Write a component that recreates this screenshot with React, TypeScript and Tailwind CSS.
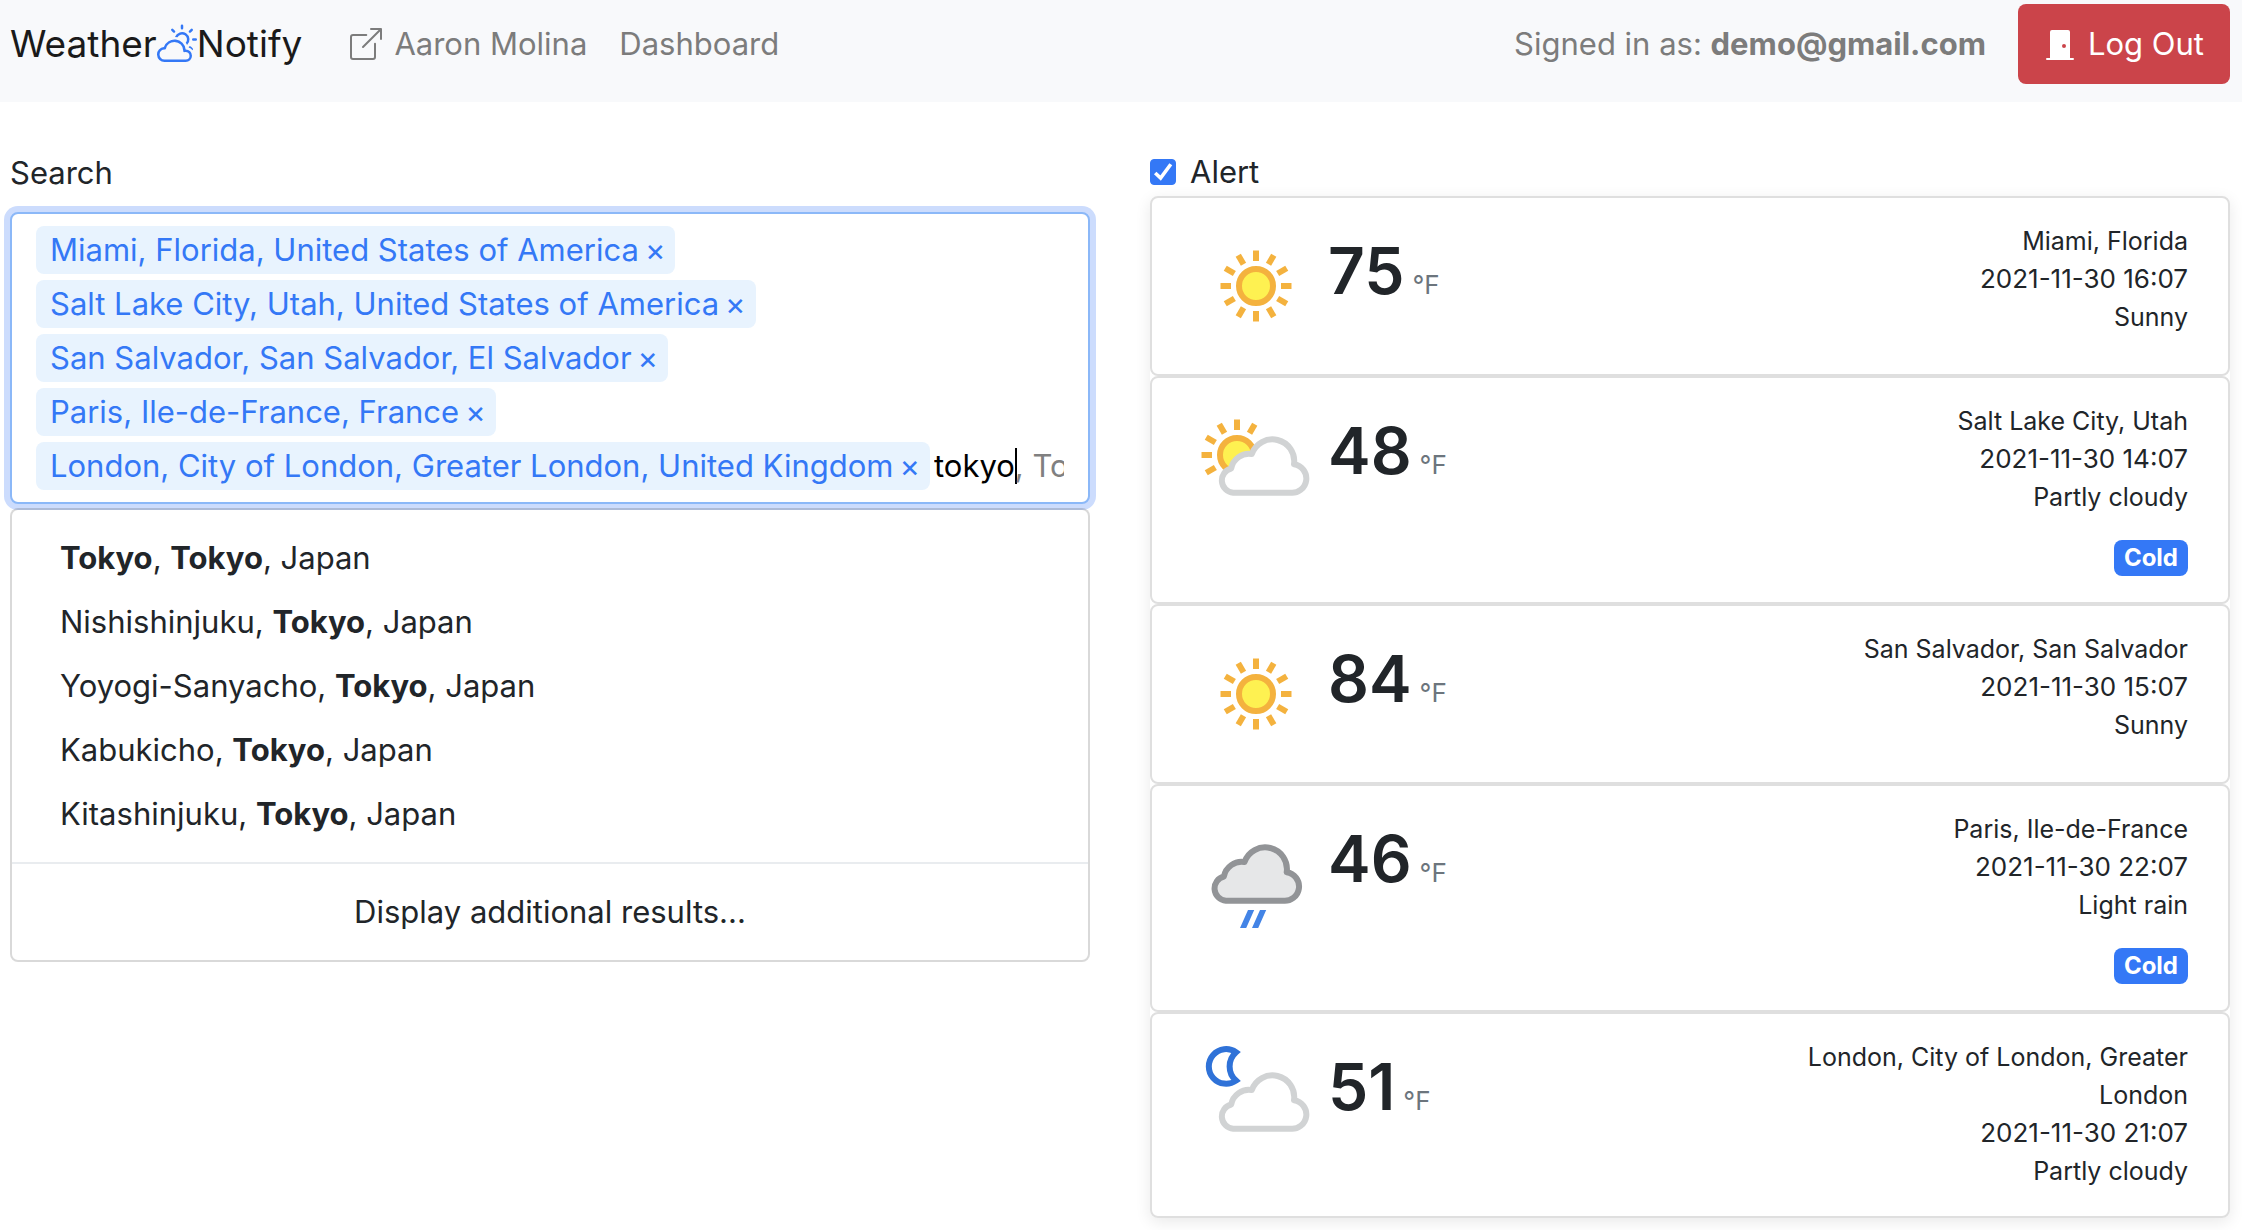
import React, { useState } from "react";
import { BsBoxArrowUpRight, BsCloudSun, BsDoorClosedFill } from "react-icons/bs";

type IconName = "sunny" | "partly-day" | "rain" | "partly-night";

type Report = {
  icon: IconName;
  temp: number;
  place: string;
  time: string;
  condition: string;
  cold?: boolean;
};

const SELECTED = [
  "Miami, Florida, United States of America",
  "Salt Lake City, Utah, United States of America",
  "San Salvador, San Salvador, El Salvador",
  "Paris, Ile-de-France, France",
  "London, City of London, Greater London, United Kingdom",
];

const RESULTS = [
  "Tokyo, Tokyo, Japan",
  "Nishishinjuku, Tokyo, Japan",
  "Yoyogi-Sanyacho, Tokyo, Japan",
  "Kabukicho, Tokyo, Japan",
  "Kitashinjuku, Tokyo, Japan",
];

const REPORTS: Report[] = [
  { icon: "sunny", temp: 75, place: "Miami, Florida", time: "2021-11-30 16:07", condition: "Sunny" },
  { icon: "partly-day", temp: 48, place: "Salt Lake City, Utah", time: "2021-11-30 14:07", condition: "Partly cloudy", cold: true },
  { icon: "sunny", temp: 84, place: "San Salvador, San Salvador", time: "2021-11-30 15:07", condition: "Sunny" },
  { icon: "rain", temp: 46, place: "Paris, Ile-de-France", time: "2021-11-30 22:07", condition: "Light rain", cold: true },
  { icon: "partly-night", temp: 51, place: "London, City of London, Greater London", time: "2021-11-30 21:07", condition: "Partly cloudy" },
];

const ALL_RAYS = [0, 30, 60, 90, 120, 150, 180, 210, 240, 270, 300, 330];
const BEHIND_CLOUD_RAYS = [150, 180, 210, 240, 270, 300];

function Sun({ cx, cy, rays }: { cx: number; cy: number; rays: number[] }) {
  return (
    <g transform={`translate(${cx} ${cy})`} stroke="#f4b23e" strokeWidth="6">
      {rays.map((angle) => (
        <line key={angle} x1="25" y1="0" x2="35.5" y2="0" transform={`rotate(${angle})`} />
      ))}
      <circle r="17" fill="#fef151" />
    </g>
  );
}

function Cloud({ fill, stroke, shift = 0 }: { fill: string; stroke: string; shift?: number }) {
  return (
    <path
      transform={`translate(${shift} 0)`}
      d="M41.2 90.7A12.3 12.3 0 0 1 39.2 66.5A18 18 0 0 1 59.8 52.1A21.8 21.8 0 0 1 102 62.3A14.3 14.3 0 0 1 98 90.7Z"
      fill={fill}
      stroke={stroke}
      strokeWidth="6"
      strokeLinejoin="round"
    />
  );
}

function WeatherIcon({ name }: { name: IconName }) {
  return (
    <svg viewBox="0 0 128 128" className="size-32 shrink-0" fill="none" role="img" aria-label={name}>
      {name === "sunny" && <Sun cx={64} cy={64} rays={ALL_RAYS} />}
      {name === "partly-day" && (
        <>
          <Sun cx={45} cy={53} rays={BEHIND_CLOUD_RAYS} />
          <Cloud fill="#ffffff" stroke="#d1d3d4" />
        </>
      )}
      {name === "rain" && (
        <>
          <Cloud fill="#e6e7e8" stroke="#929497" shift={-7.3} />
          <path d="M56 100h6.2l-8 18H48zM68 100h6.2l-8 18H60z" fill="#4384e6" />
        </>
      )}
      {name === "partly-night" && (
        <>
          <path
            d="M44 14.2A17.3 17.3 0 1 0 44 42.6A19 19 0 0 1 44 14.2Z"
            stroke="#2f72d8"
            strokeWidth="6"
            strokeMiterlimit="1.8"
          />
          <Cloud fill="#ffffff" stroke="#d1d3d4" />
        </>
      )}
    </svg>
  );
}

function Highlighted({ text, term }: { text: string; term: string }) {
  return (
    <>
      {text.split(term).map((part, i) => (
        <React.Fragment key={i}>
          {i > 0 && <strong className="font-bold">{term}</strong>}
          {part}
        </React.Fragment>
      ))}
    </>
  );
}

function Navbar() {
  return (
    <header className="flex flex-wrap items-center bg-[#f8f9fb] pt-1 pr-3 pb-[18px] pl-[10px] text-[#7c7c7c]">
      <a href="#home" className="flex items-center text-[37px] leading-[60px] text-[#1a1a1a]">
        Weather
        <BsCloudSun className="mb-1 size-10 text-[#3478f6]" />
        Notify
      </a>
      <nav className="ml-12 flex items-center gap-8">
        <a href="#profile" className="flex items-center gap-3">
          <BsBoxArrowUpRight className="size-8" />
          Aaron Molina
        </a>
        <a href="#dashboard">Dashboard</a>
      </nav>
      <div className="ml-auto flex items-center gap-8">
        <span>
          Signed in as: <strong className="font-bold">demo@gmail.com</strong>
        </span>
        <button type="button" className="flex h-20 items-center gap-3 rounded-lg bg-[#cb444a] px-[26px] text-white">
          <BsDoorClosedFill className="size-8" />
          Log Out
        </button>
      </div>
    </header>
  );
}

function CitySearch() {
  const [query, setQuery] = useState("tokyo");
  return (
    <section>
      <label htmlFor="city" className="block h-16 leading-[50px]">
        Search
      </label>
      <div className="flex flex-wrap gap-x-1 gap-y-[6px] rounded-lg border-2 border-[#8bb8f8] bg-white px-6 py-3 shadow-[0_0_0_6px_#ccdcfd]">
        {SELECTED.map((city) => (
          <span key={city} className="flex h-12 items-center rounded-lg bg-[#e8f3fe] pr-[10px] pl-[14px] text-[#3478f6]">
            {city}
            <button type="button" aria-label={`Remove ${city}`} className="ml-[6px]">
              ×
            </button>
          </span>
        ))}
        <div className="relative h-12 min-w-0 flex-1 overflow-hidden">
          <div aria-hidden="true" className="absolute inset-0 flex items-center whitespace-pre text-[#808080]">
            <span className="text-transparent">{query}</span>
            <span className="-mr-[2px] h-9 w-[2px] shrink-0 bg-black" />
            <span>, Tokyo, Japan</span>
          </div>
          <input
            id="city"
            type="text"
            value={query}
            onChange={(e) => setQuery(e.target.value)}
            className="relative block h-12 w-full bg-transparent text-black caret-transparent outline-none"
          />
        </div>
      </div>
      <ul className="relative mt-1 rounded-lg border-2 border-black/15 bg-white bg-clip-padding py-4">
        {RESULTS.map((result) => (
          <li key={result}>
            <button type="button" className="block w-full px-12 py-2 text-left leading-[48px]">
              <Highlighted text={result} term="Tokyo" />
            </button>
          </li>
        ))}
        <li className="mt-4 border-t-2 border-[#e9ecef] pt-4">
          <button type="button" className="block w-full px-12 py-2 text-center leading-[48px]">
            Display additional results...
          </button>
        </li>
      </ul>
    </section>
  );
}

function ReportCard({ report }: { report: Report }) {
  return (
    <article className="flex rounded-lg border-2 border-[#dfdfdf] bg-white px-10 py-6">
      <WeatherIcon name={report.icon} />
      <div className="flex items-baseline gap-2 self-start pl-2">
        <span className="text-[64px] leading-[98px] font-semibold">{report.temp}</span>
        <span className="text-[26px] text-[#6c757d]">°F</span>
      </div>
      <div className="ml-auto w-2/5 pb-[2px] text-right text-[25px] leading-[38px]">
        <div>{report.place}</div>
        <div className="text-[26px]">{report.time}</div>
        <div>{report.condition}</div>
        {report.cold && (
          <div className="mt-6 flex justify-end">
            <span className="rounded-lg bg-[#3478f6] px-[10px] text-[24px] leading-9 font-bold text-white">Cold</span>
          </div>
        )}
      </div>
    </article>
  );
}

function Alerts() {
  const [alert, setAlert] = useState(true);
  return (
    <section>
      <label className="flex h-12 items-center gap-[14px]">
        <span className="relative flex size-[26px]">
          <input
            type="checkbox"
            checked={alert}
            onChange={(e) => setAlert(e.target.checked)}
            className="size-[26px] appearance-none rounded-sm border border-[#3478f6] checked:bg-[#3478f6]"
          />
          {alert && (
            <svg viewBox="0 0 26 26" className="pointer-events-none absolute inset-0" fill="none">
              <path d="M5.2 14L10.6 19L20.8 5.2" stroke="#fff" strokeWidth="3.6" />
            </svg>
          )}
        </span>
        Alert
      </label>
      <div className="rounded-lg shadow-[0_4px_16px_rgba(0,0,0,0.09)]">
        {REPORTS.map((report) => (
          <ReportCard key={report.place} report={report} />
        ))}
      </div>
    </section>
  );
}

export default function App() {
  return (
    <div className="min-h-screen bg-white font-['Inter',sans-serif] text-[31px] leading-[48px] text-[#212529]">
      <Navbar />
      <main className="grid grid-cols-2 items-start gap-[60px] pt-[46px] pr-3 pl-[10px]">
        <CitySearch />
        <Alerts />
      </main>
    </div>
  );
}
